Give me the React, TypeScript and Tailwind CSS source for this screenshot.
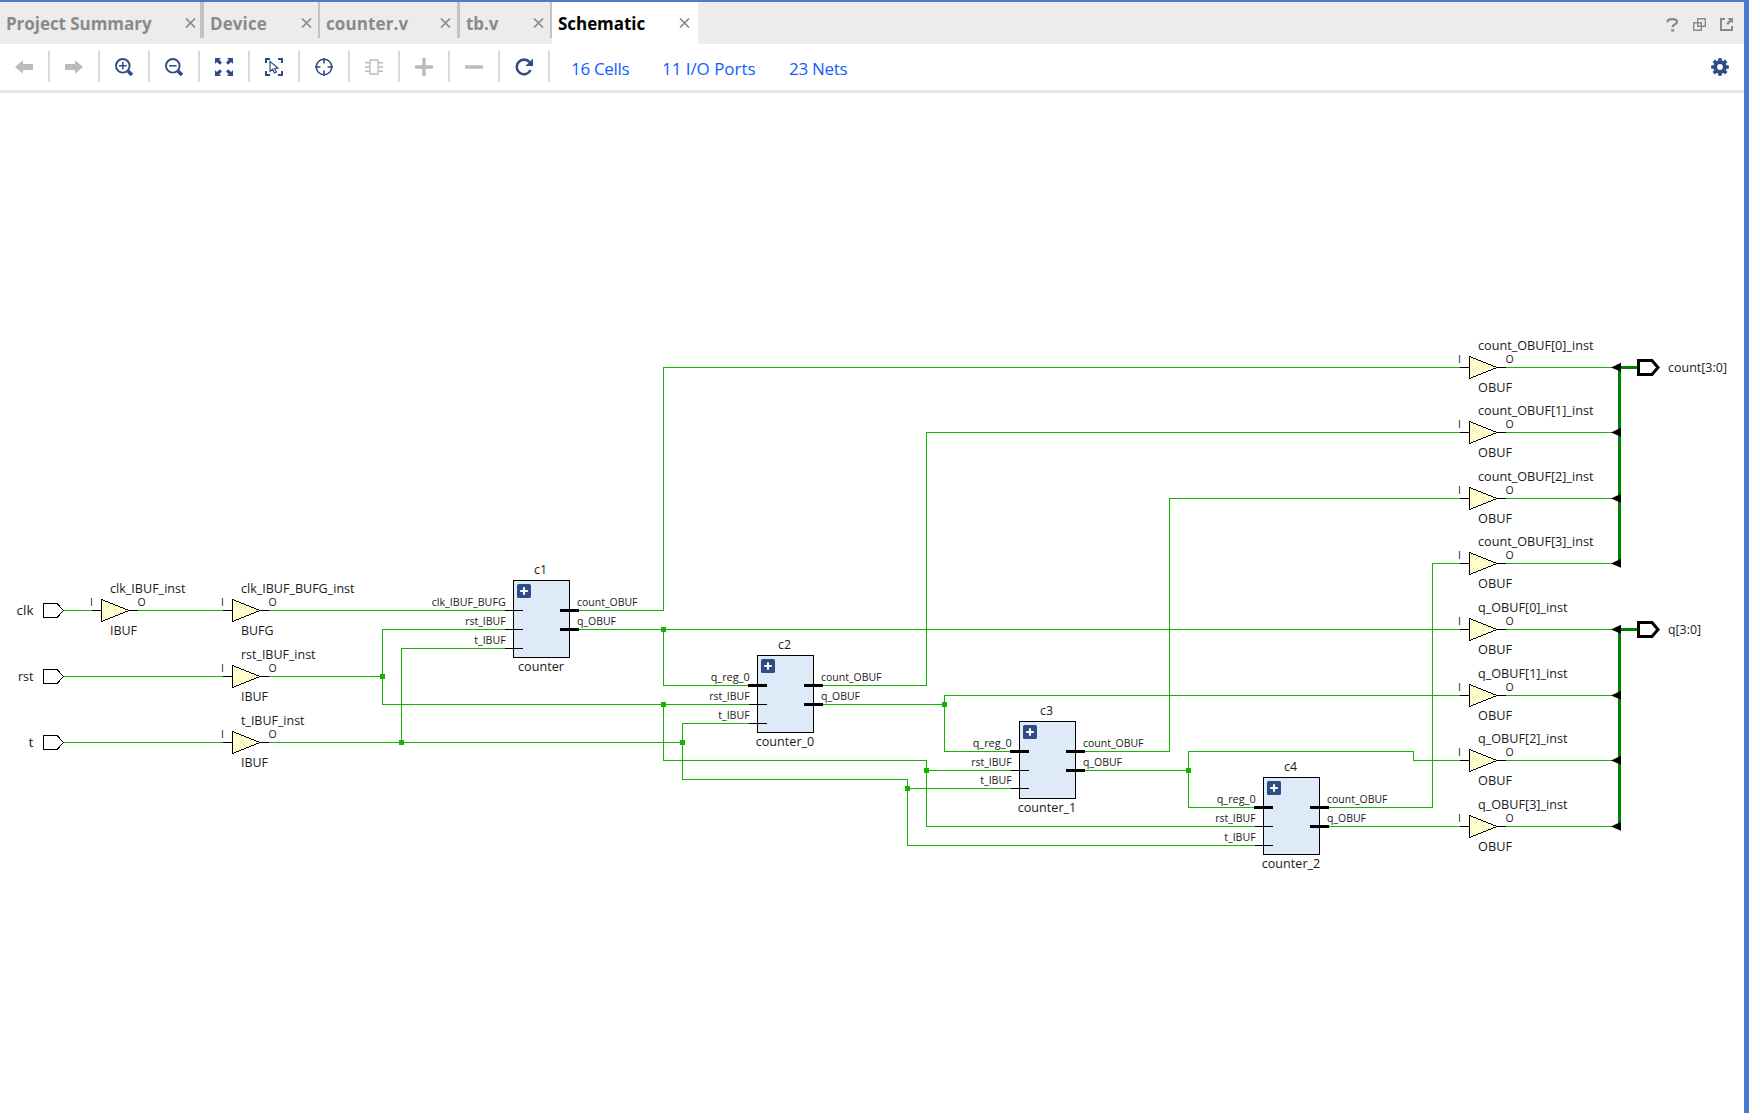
import React from "react";

const GREEN = "#14b400";
const BUS = "#008200";
const NAVY = "#2f4d85";
const GREY = "#bbbbbb";

/* ---------- tab strip ---------- */

type TabProps = {
  label: string;
  tab: string;
  text: string;
  active?: boolean;
};

function CloseGlyph() {
  return (
    <svg width="11" height="10" viewBox="0 0 11 10" className="block shrink-0">
      <path d="M1 0.5L10 9.5M10 0.5L1 9.5" stroke="#8a8a8a" strokeWidth="1.7" fill="none" />
    </svg>
  );
}

function Tab({ label, tab, text, active }: TabProps) {
  return (
    <div className={`flex shrink-0 ${tab} ${active ? "h-[42px] bg-white text-black" : "h-9 border-[#c2c2c2] text-[#8a8a8a]"}`}>
      <span className={`pt-[10px] text-[17px] leading-6 font-bold whitespace-nowrap ${text}`}>{label}</span>
      <span className="ml-auto pt-4">
        <CloseGlyph />
      </span>
    </div>
  );
}

function TabBar() {
  return (
    <div className="flex h-[42px] shrink-0 bg-[#ececec]">
      <Tab label="Project Summary" tab="w-[204px] border-r-4 pr-[4px] pl-[6px]" text="tracking-[-0.05px]" />
      <Tab label="Device" tab="w-[116px] border-r-2 pr-[6px] pl-[6px]" text="tracking-[0.1px]" />
      <Tab label="counter.v" tab="w-[140px] border-r-[3px] pr-[6px] pl-[6px]" text="tracking-[0.1px]" />
      <Tab label="tb.v" tab="w-[92px] border-r-2 pr-[6px] pl-[6px]" text="tracking-[-0.1px]" />
      <Tab label="Schematic" tab="w-[146px] pr-[8px] pl-[6px]" text="tracking-[-0.05px]" active />
      <div className="ml-auto flex items-center gap-[14px] pt-[3px] pr-[11px]">
        <svg width="13" height="14" viewBox="0 0 13 14">
          <path d="M1.5 4.2C1.5 2 3.5 1.2 6.3 1.2C9.2 1.2 11 2.2 11 4.1C11 6.4 6.6 6.2 6.6 9.3" fill="none" stroke="#8a8a8a" strokeWidth="2.2" />
          <path d="M5.2 11.2h3v2.4h-3z" fill="#8a8a8a" />
        </svg>
        <svg width="13" height="13" viewBox="0 0 13 13" fill="none" stroke="#8a8a8a" strokeWidth="1.4">
          <path d="M4.7 0.7h7.6v7.6h-7.6zM4.2 4.7H0.7v7.6h7.6V8.8" />
          <path d="M4.7 4.7h3.6v3.6" />
        </svg>
        <svg width="13" height="13" viewBox="0 0 13 13">
          <path d="M5 1H1v11h11V8" fill="none" stroke="#8a8a8a" strokeWidth="2" />
          <path d="M7.5 0H13v5.5L11.2 3.7L8 6.9L6.3 5.2L9.4 1.9z" fill="#8a8a8a" />
        </svg>
      </div>
    </div>
  );
}

/* ---------- tool bar ---------- */

function Tool({ children }: { children: React.ReactNode }) {
  return (
    <div className="flex h-[31px] w-[50px] shrink-0 items-center justify-center border-r-2 border-[#dadada]">
      <svg width="20" height="20" viewBox="0 0 20 20" className="block">
        {children}
      </svg>
    </div>
  );
}

function ToolBar() {
  return (
    <div className="flex h-[49px] shrink-0 border-b-[3px] border-[#e6e6e6] bg-white pt-[7px]">
      <Tool>
        <path d="M1 10L9 3.2V7H19V13H9V16.8z" fill={GREY} />
      </Tool>
      <Tool>
        <path d="M19 10L11 3.2V7H1V13H11V16.8z" fill={GREY} />
      </Tool>
      <Tool>
        <circle cx="8.8" cy="8.8" r="6.8" fill="none" stroke={NAVY} strokeWidth="1.9" />
        <path d="M5 8.8h7.6M8.8 5v7.6" stroke={NAVY} strokeWidth="1.5" />
        <path d="M14 14L18 18" stroke={NAVY} strokeWidth="3.6" />
      </Tool>
      <Tool>
        <circle cx="8.8" cy="8.8" r="6.8" fill="none" stroke={NAVY} strokeWidth="1.9" />
        <path d="M5 8.8h7.6" stroke={NAVY} strokeWidth="1.5" />
        <path d="M14 14L18 18" stroke={NAVY} strokeWidth="3.6" />
      </Tool>
      <Tool>
        <path
          d="M1 1h6L5.3 2.7L8 5.6L5.8 7.8L2.9 5L1 7zM19 1h-6l1.7 1.7L12 5.6L14.2 7.8L17.1 5L19 7zM1 19h6L5.3 17.3L8 14.4L5.8 12.2L2.9 15L1 13zM19 19h-6l1.7-1.7L12 14.4L14.2 12.2L17.1 15L19 13z"
          fill={NAVY}
        />
      </Tool>
      <Tool>
        <path d="M2 6V2H6M14 2H18V6M2 14V18H6M14 18H18V14" fill="none" stroke={NAVY} strokeWidth="2" />
        <path d="M6 4.5V14.5L8.6 12.2L10.4 16L12.4 15L10.6 11.4L14 11z" fill="#fff" stroke={NAVY} strokeWidth="1.2" />
      </Tool>
      <Tool>
        <circle cx="10" cy="10" r="7.7" fill="none" stroke={NAVY} strokeWidth="1.6" />
        <path d="M10 1v5.4M10 13.6V19M1 10h5.4M13.6 10H19" stroke={NAVY} strokeWidth="1.6" />
      </Tool>
      <Tool>
        <path d="M6 3h8v14H6z" fill="#fff" stroke={GREY} strokeWidth="1.3" />
        <path d="M1 5.8h5M1 10h5M1 14.2h5M14 5.8h5M14 10h5M14 14.2h5" stroke={GREY} strokeWidth="1.4" />
      </Tool>
      <Tool>
        <path d="M1 10h18M10 1v18" stroke={GREY} strokeWidth="3.4" />
      </Tool>
      <Tool>
        <path d="M1 10h18" stroke={GREY} strokeWidth="3.4" />
      </Tool>
      <Tool>
        <path d="M16.6 13A7.3 7.3 0 1 1 15.6 5.2" fill="none" stroke={NAVY} strokeWidth="2.6" />
        <path d="M19 1.6V9H11.4z" fill={NAVY} />
      </Tool>
      <div className="ml-[21px] flex gap-[31px] text-[17px] leading-6 whitespace-nowrap text-[#0f5dff]">
        <span className="w-[60px] pt-[6px] tracking-[-0.3px]">16 Cells</span>
        <span className="w-[96px] pt-[6px] tracking-[-0.05px]">11 I/O Ports</span>
        <span className="w-[61px] pt-[6px] tracking-[-0.3px]">23 Nets</span>
      </div>
      <div className="mr-[15px] ml-auto pt-[7px]">
        <svg width="18" height="18" viewBox="-9 -9 18 18" className="block">
          {[0, 45, 90, 135].map((a) => (
            <path key={a} d="M-1.8 -8.8h3.6v17.6h-3.6z" fill={NAVY} transform={`rotate(${a})`} />
          ))}
          <circle r="6.7" fill={NAVY} />
          <circle r="2.9" fill="#fff" />
        </svg>
      </div>
    </div>
  );
}

/* ---------- schematic ---------- */

type LabelProps = { x: number; y: number; w?: number; size?: number; anchor?: "start" | "middle" | "end"; children: string };

function Label({ x, y, w, size = 12.6, anchor = "start", children }: LabelProps) {
  return (
    <text x={x} y={y} fontSize={size} textAnchor={anchor} textLength={w} lengthAdjust="spacingAndGlyphs" fill="#1a1a1a">
      {children}
    </text>
  );
}

function Buffer({ x, y, name, w, type, tw }: { x: number; y: number; name: string; w: number; type: string; tw: number }) {
  return (
    <g>
      <path d={`M${x - 9} ${y + 0.5}H${x}M${x + 28} ${y + 0.5}H${x + 37}`} stroke="#000" shapeRendering="crispEdges" />
      <path d={`M${x + 0.5} ${y - 10.5}L${x + 28} ${y + 0.5}L${x + 0.5} ${y + 11.5}z`} fill="#fffdcb" stroke="#000" shapeRendering="crispEdges" />
      <Label x={x + 9} y={y - 17} w={w}>{name}</Label>
      <Label x={x + 9} y={y + 25} w={tw}>{type}</Label>
      <Label x={x - 9.5} y={y - 4.4} size={10.5} anchor="middle">I</Label>
      <Label x={x + 40.5} y={y - 4.4} size={10.5} anchor="middle">O</Label>
    </g>
  );
}

type Pin = { label: string; y: number; w: number; bold?: boolean };

function Cell({ x, y, name, type, tw, pins }: { x: number; y: number; name: string; type: string; tw: number; pins: Pin[] }) {
  return (
    <g>
      <rect x={x + 0.5} y={y + 0.5} width="56" height="77" fill="#dfeaf8" stroke="#000" shapeRendering="crispEdges" />
      <rect x={x + 4} y={y + 4} width="14" height="14" rx="1.6" fill={NAVY} />
      <path d={`M${x + 7.2} ${y + 11}h7.6M${x + 11} ${y + 7.2}v7.6`} stroke="#fff" strokeWidth="2" />
      <Label x={x + 27.5} y={y - 6} w={13} anchor="middle">{name}</Label>
      <Label x={x + 28} y={y + 91} w={tw} anchor="middle">{type}</Label>
      {pins.map((p) => (
        <g key={p.label}>
          <path
            d={p.bold ? `M${x - 9} ${p.y + 0.5}h19` : `M${x - 8} ${p.y + 0.5}h18`}
            stroke="#000"
            strokeWidth={p.bold ? 3 : 1}
            shapeRendering="crispEdges"
          />
          <Label x={x - 7.3} y={p.y - 4.4} w={p.w} size={10.8} anchor="end">{p.label}</Label>
        </g>
      ))}
      <path d={`M${x + 47} ${y + 30.5}h19M${x + 47} ${y + 49.5}h19`} stroke="#000" strokeWidth="3" shapeRendering="crispEdges" />
      <Label x={x + 64} y={y + 25.6} w={60.5} size={10.8}>count_OBUF</Label>
      <Label x={x + 64} y={y + 44.6} w={39} size={10.8}>q_OBUF</Label>
    </g>
  );
}

function Bus({ ys, label, w }: { ys: number[]; label: string; w: number }) {
  const y = ys[0];
  return (
    <g>
      <path d={`M1619.5 ${y}V${ys[3] + 1}`} stroke={BUS} strokeWidth="3" shapeRendering="crispEdges" />
      <path d={`M1620 ${y + 0.5}H1638`} stroke={BUS} strokeWidth="3" shapeRendering="crispEdges" />
      {ys.map((v) => (
        <path key={v} d={`M1611 ${v + 0.5}L1621 ${v - 4.2}V${v + 4.8}z`} fill="#000" />
      ))}
      <path d={`M1638.5 ${y - 6.5}H1652L1658 ${y + 0.5}L1652 ${y + 7.5}H1638.5z`} fill="#fff" stroke="#000" strokeWidth="3" />
      <Label x={1668} y={y + 5} w={w}>{label}</Label>
    </g>
  );
}

const inputs = [
  { label: "clk", y: 610, w: 17 },
  { label: "rst", y: 676, w: 15.5 },
  { label: "t", y: 742, w: 5 },
];

const wires = [
  "M63 610.5H92M138 610.5H223M269 610.5H505",
  "M63 676.5H223M269 676.5H382.5M505 629.5H382.5V704.5H749",
  "M63 742.5H223M269 742.5H682.5M401.5 742.5V648.5H505",
  "M579 610.5H663.5V367.5H1460",
  "M579 629.5H1460M663.5 629.5V685.5H749",
  "M663.5 704.5V760.5H926.5V826.5H1255M926.5 770.5H1011",
  "M749 723.5H682.5V779.5H907.5V845.5H1255M907.5 788.5H1011",
  "M822 685.5H926.5V432.5H1460",
  "M822 704.5H944.5M1011 751.5H944.5V695.5H1460",
  "M1085 751.5H1169.5V498.5H1460",
  "M1085 770.5H1188.5M1255 807.5H1188.5V751.5H1413.5V760.5H1460",
  "M1329 807.5H1432.5V563.5H1460",
  "M1329 826.5H1460",
];

const countYs = [367, 432, 498, 563];
const qYs = [629, 695, 760, 826];

const junctions = [
  [382, 676], [401, 742], [663, 629], [663, 704], [682, 742], [944, 704], [926, 770], [907, 788], [1188, 770],
];

const chained = (a: number, b: number, c: number): Pin[] => [
  { label: "q_reg_0", y: a, w: 39, bold: true },
  { label: "rst_IBUF", y: b, w: 40.5 },
  { label: "t_IBUF", y: c, w: 31.5 },
];

function Schematic() {
  return (
    <svg width="1744" height="1020" viewBox="0 93 1744 1020" className="block shrink-0">
      <path d={wires.join("")} fill="none" stroke={GREEN} shapeRendering="crispEdges" />
      {[...countYs, ...qYs].map((y) => (
        <path key={y} d={`M1506 ${y + 0.5}H1612`} stroke={GREEN} shapeRendering="crispEdges" />
      ))}
      {junctions.map(([x, y]) => (
        <rect key={`${x}-${y}`} x={x - 2} y={y - 2} width="5" height="5" fill={GREEN} />
      ))}
      {inputs.map((p) => (
        <g key={p.label}>
          <path d={`M43.5 ${p.y - 6.5}H57L63.5 ${p.y + 0.5}L57 ${p.y + 7.5}H43.5z`} fill="#fff" stroke="#000" shapeRendering="crispEdges" />
          <Label x={33.5} y={p.y + 5} w={p.w} anchor="end">{p.label}</Label>
        </g>
      ))}
      <Buffer x={101} y={610} name="clk_IBUF_inst" w={75.5} type="IBUF" tw={27} />
      <Buffer x={232} y={610} name="clk_IBUF_BUFG_inst" w={113.5} type="BUFG" tw={32.5} />
      <Buffer x={232} y={676} name="rst_IBUF_inst" w={74.5} type="IBUF" tw={27} />
      <Buffer x={232} y={742} name="t_IBUF_inst" w={63.5} type="IBUF" tw={27} />
      <Cell
        x={513} y={580} name="c1" type="counter" tw={46}
        pins={[
          { label: "clk_IBUF_BUFG", y: 610, w: 74 },
          { label: "rst_IBUF", y: 629, w: 40.5 },
          { label: "t_IBUF", y: 648, w: 31.5 },
        ]}
      />
      <Cell x={757} y={655} name="c2" type="counter_0" tw={58.5} pins={chained(685, 704, 723)} />
      <Cell x={1019} y={721} name="c3" type="counter_1" tw={58.5} pins={chained(751, 770, 788)} />
      <Cell x={1263} y={777} name="c4" type="counter_2" tw={58.5} pins={chained(807, 826, 845)} />
      {countYs.map((y, i) => (
        <Buffer key={y} x={1469} y={y} name={`count_OBUF[${i}]_inst`} w={115.5} type="OBUF" tw={34} />
      ))}
      {qYs.map((y, i) => (
        <Buffer key={y} x={1469} y={y} name={`q_OBUF[${i}]_inst`} w={89.5} type="OBUF" tw={34} />
      ))}
      <Bus ys={countYs} label="count[3:0]" w={59} />
      <Bus ys={qYs} label="q[3:0]" w={33} />
    </svg>
  );
}

export default function App() {
  return (
    <div className="flex h-[1113px] w-[1749px] flex-col overflow-hidden border-t-2 border-r-[5px] border-[#4a7bce] bg-white font-['Open_Sans','Noto_Sans',sans-serif]">
      <TabBar />
      <ToolBar />
      <Schematic />
    </div>
  );
}
